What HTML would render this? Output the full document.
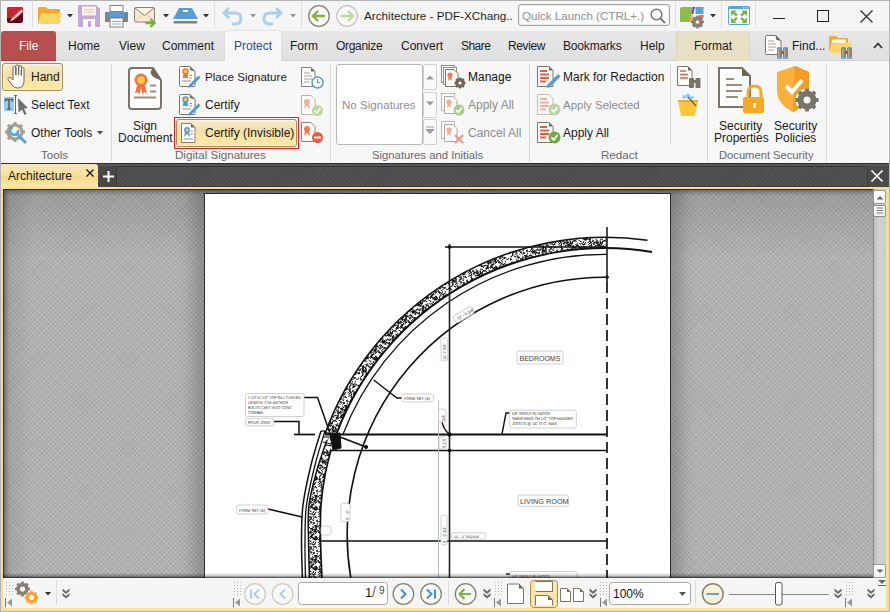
<!DOCTYPE html>
<html><head><meta charset="utf-8">
<style>
*{box-sizing:border-box;margin:0;padding:0}
html,body{width:890px;height:612px;overflow:hidden;background:#f5f5f5;font-family:"Liberation Sans",sans-serif;font-size:12px;color:#1a1a1a}
.a{position:absolute}
.t{position:absolute;white-space:nowrap;line-height:14px}
svg{position:absolute;overflow:visible}
.sep{position:absolute;width:1px;background:#d9d9d9}
.tab{position:absolute;top:39px;white-space:nowrap;color:#1b1b1b}
.gl{position:absolute;top:148px;color:#69676f;font-size:11.6px;white-space:nowrap;line-height:14px}
.dis{color:#8c8c8c}
</style></head><body>
<!-- outer frame -->
<div class="a" style="left:0;top:0;width:890px;height:612px;border:1px solid #b4b4b4;border-bottom-color:#b4b4b4"></div>

<!-- TITLE BAR -->
<div class="a" style="left:1px;top:1px;width:888px;height:30px;background:#f5f5f5"></div>
<div id="titlebar">
  <!-- app icon -->
  <svg style="left:7px;top:7px" width="16" height="16" viewBox="0 0 16 16">
    <rect x="0" y="0" width="16" height="16" rx="2" fill="#5c0022"/>
    <path d="M2 0 H14 Q16 0 16 2 V6 L9 12 L0 11 V2 Q0 0 2 0Z" fill="#d42232"/>
    <rect x="0" y="5.5" width="5" height="5" fill="#a33a12"/>
    <path d="M3 14.5 L5 11 L14.5 2.5 L16 4.5 L7 12.5Z" fill="#fff"/>
    <path d="M5.5 11.2 L14.8 3.2" stroke="#c0302a" stroke-width=".9" stroke-dasharray="1.2 .8"/>
    <path d="M7 12.3 L15.5 5" stroke="#a33a12" stroke-width=".8" stroke-dasharray="1.2 .8"/>
  </svg>
  <div class="sep" style="left:32px;top:2px;height:26px;background:#dedede"></div>
  <!-- folder -->
  <svg style="left:38px;top:7px" width="24" height="18" viewBox="0 0 24 18">
    <path d="M0 2 Q0 0 2 0 L8 0 L10 2 L21 2 Q22 2 22 3 L22 16 L0 16 Z" fill="#f7a825"/>
    <path d="M3 6 L24 6 L21 16 Q21 17 20 17 L0 17 Z" fill="#fdd66a"/>
  </svg>
  <svg style="left:67px;top:14px" width="6" height="4"><path d="M0 0 L6 0 L3 3.5Z" fill="#333"/></svg>
  <!-- save -->
  <svg style="left:78px;top:5px" width="22" height="22" viewBox="0 0 22 22">
    <path d="M1 0 H18 L22 4 V21 Q22 22 21 22 H1 Q0 22 0 21 V1 Q0 0 1 0Z" fill="#c3a9d6"/>
    <rect x="4" y="1.5" width="14" height="9" fill="#fbf4e6"/>
    <path d="M6 4.5 H16 M6 7 H16" stroke="#d9ccb8" stroke-width="1"/>
    <rect x="5" y="14" width="12" height="8" fill="#fff"/>
    <rect x="10" y="16" width="3" height="6" fill="#c3a9d6"/>
  </svg>
  <!-- printer -->
  <svg style="left:105px;top:5px" width="23" height="22" viewBox="0 0 23 22">
    <rect x="5" y="0.5" width="13" height="6" fill="#fff" stroke="#8a7f70" stroke-width="1"/>
    <path d="M1 7 H22 Q23 7 23 8 V17 H0 V8 Q0 7 1 7Z" fill="#8a7f70"/>
    <rect x="3" y="7" width="17" height="5" fill="#5b9bd5"/>
    <rect x="5" y="13" width="13" height="9" fill="#fff" stroke="#8a7f70" stroke-width="1"/>
    <path d="M7 16.5H16 M7 19H16" stroke="#7ab0e0" stroke-width="1"/>
  </svg>
  <!-- email -->
  <svg style="left:134px;top:7px" width="23" height="20" viewBox="0 0 23 20">
    <rect x="0.5" y="0.5" width="20" height="14.5" rx="1.2" fill="#f8e9cf" stroke="#8a7f70"/>
    <path d="M1 1 L10.5 8.5 L20 1" stroke="#8a7f70" fill="#fdf5e6"/>
    <path d="M1 14.5 L8 8 M20 14.5 L13 8" stroke="#cdbfa6" stroke-width=".8"/>
    <path d="M11.5 16 H20 M16.5 12 L20.5 16 L16.5 20" stroke="#76b043" stroke-width="2.4" fill="none"/>
  </svg>
  <svg style="left:163px;top:14px" width="6" height="4"><path d="M0 0 L6 0 L3 3.5Z" fill="#333"/></svg>
  <!-- scanner -->
  <svg style="left:173px;top:8px" width="25" height="16" viewBox="0 0 25 16">
    <path d="M6 0 H19 L25 11 H0Z" fill="#5b9bd5"/>
    <rect x="10" y="2" width="5" height="2" fill="#fff"/>
    <rect x="0.5" y="13" width="24" height="2.5" rx="1" fill="#8a7f70"/>
  </svg>
  <svg style="left:203px;top:14px" width="6" height="4"><path d="M0 0 L6 0 L3 3.5Z" fill="#333"/></svg>
  <div class="sep" style="left:214px;top:2px;height:26px;background:#dedede"></div>
  <!-- undo -->
  <svg style="left:222px;top:7px" width="21" height="18" viewBox="0 0 21 18">
    <path d="M2 6 H13 Q19 6 19 11.5 Q19 17 13 17 H10" stroke="#a9d0ec" stroke-width="3" fill="none"/>
    <path d="M7 1 L2 6 L7 11" stroke="#a9d0ec" stroke-width="3" fill="none"/>
  </svg>
  <svg style="left:250px;top:14px" width="6" height="4"><path d="M0 0 L6 0 L3 3.5Z" fill="#999"/></svg>
  <!-- redo -->
  <svg style="left:262px;top:7px" width="21" height="18" viewBox="0 0 21 18">
    <path d="M19 6 H8 Q2 6 2 11.5 Q2 17 8 17 H11" stroke="#a9d0ec" stroke-width="3" fill="none"/>
    <path d="M14 1 L19 6 L14 11" stroke="#a9d0ec" stroke-width="3" fill="none"/>
  </svg>
  <svg style="left:290px;top:14px" width="6" height="4"><path d="M0 0 L6 0 L3 3.5Z" fill="#999"/></svg>
  <div class="sep" style="left:301px;top:2px;height:26px;background:#dedede"></div>
  <!-- back / forward -->
  <svg style="left:308px;top:5px" width="22" height="22" viewBox="0 0 22 22">
    <circle cx="11" cy="11" r="10.3" fill="#f8f8f8" stroke="#8c8273" stroke-width="1.3"/>
    <path d="M5 11 H17 M10 6 L5 11 L10 16" stroke="#7cb342" stroke-width="2.4" fill="none"/>
  </svg>
  <svg style="left:336px;top:5px" width="22" height="22" viewBox="0 0 22 22">
    <circle cx="11" cy="11" r="10.3" fill="#f8f8f8" stroke="#c9c3ba" stroke-width="1.2"/>
    <path d="M5 11 H17 M12 6 L17 11 L12 16" stroke="#bcd9a0" stroke-width="2.4" fill="none"/>
  </svg>
  <div class="t" style="left:364px;top:9px;color:#1d1d1d;font-size:11.7px">Architecture - PDF-XChang..</div>
  <!-- quick launch -->
  <div class="a" style="left:518px;top:4px;width:152px;height:22px;border:1px solid #a3a3a3;border-radius:3px;background:#fff;box-shadow:inset 0 0 0 1px #ececec"></div>
  <div class="t" style="left:522px;top:9px;color:#8e8e8e;font-size:11.6px">Quick Launch (CTRL+.)</div>
  <svg style="left:650px;top:8px" width="16" height="16" viewBox="0 0 16 16">
    <circle cx="6.5" cy="6.5" r="5.3" stroke="#777" stroke-width="1.5" fill="none"/>
    <path d="M10.5 10.5 L15 15" stroke="#777" stroke-width="1.8"/>
  </svg>
  <div class="sep" style="left:675px;top:2px;height:26px;background:#dedede"></div>
  <!-- ui options -->
  <svg style="left:680px;top:6px" width="25" height="24" viewBox="0 0 25 24">
    <path d="M2 1 H13 L9.5 16 H1 Q0 16 0 15 V3 Q0 1 2 1Z" fill="#8dbb4c"/>
    <path d="M13 1 H15 L13.3 8 H11.3Z" fill="#6a3f9c"/>
    <rect x="15.5" y="1" width="8" height="7" fill="#5ba3dd"/>
    <path d="M11 9 H13 L11.3 16 H9.3Z" fill="#f7a825"/>
    <path d="M19 9 H23.5 V12 H19Z" fill="#f26b43"/>
    <circle cx="17.5" cy="16" r="4.2" fill="none" stroke="#8a7f70" stroke-width="3"/>
    <path d="M17.5 9.5 V22.5 M11 16 H24 M12.9 11.4 L22.1 20.6 M22.1 11.4 L12.9 20.6" stroke="#8a7f70" stroke-width="2.2"/>
    <circle cx="17.5" cy="16" r="1.8" fill="#f5f5f5"/>
  </svg>
  <svg style="left:710px;top:14px" width="6" height="4"><path d="M0 0 L6 0 L3 3.5Z" fill="#333"/></svg>
  <div class="sep" style="left:721px;top:2px;height:26px;background:#dedede"></div>
  <!-- fullscreen -->
  <svg style="left:728px;top:6px" width="22" height="19" viewBox="0 0 22 19">
    <rect x="0.5" y="0.5" width="21" height="18" rx="1" fill="#fff" stroke="#5ba3dd"/>
    <rect x="0.5" y="0.5" width="21" height="2.5" fill="#5ba3dd"/>
    <circle cx="15.5" cy="1.8" r=".6" fill="#fff"/><circle cx="17.5" cy="1.8" r=".6" fill="#fff"/><circle cx="19.5" cy="1.8" r=".6" fill="#fff"/>
    <g fill="#7cb342">
      <path d="M3 4.5 H8.5 L7 6 L9.8 8.8 L8 10.6 L5.2 7.8 L3 10Z"/>
      <path d="M19 4.5 H13.5 L15 6 L12.2 8.8 L14 10.6 L16.8 7.8 L19 10Z"/>
      <path d="M3 17 H8.5 L7 15.5 L9.8 12.7 L8 10.9 L5.2 13.7 L3 11.5Z"/>
      <path d="M19 17 H13.5 L15 15.5 L12.2 12.7 L14 10.9 L16.8 13.7 L19 11.5Z"/>
    </g>
  </svg>
  <div class="sep" style="left:755px;top:2px;height:26px;background:#dedede"></div>
  <div class="a" style="left:773px;top:18px;width:12px;height:1px;background:#222"></div>
  <div class="a" style="left:817px;top:10px;width:12px;height:12px;border:1px solid #222"></div>
  <svg style="left:860px;top:10px" width="13" height="13" viewBox="0 0 13 13"><path d="M0.5 0.5 L12.5 12.5 M12.5 0.5 L0.5 12.5" stroke="#222" stroke-width="1.1"/></svg>
</div>

<!-- TAB STRIP -->
<div class="a" style="left:1px;top:31px;width:888px;height:30px;background:linear-gradient(#e7e7e7,#e0e0e0);border-bottom:1px solid #d2d2d2"></div>
<div class="a" style="left:1px;top:31px;width:55px;height:30px;background:#b94e4e;border-radius:3px 3px 0 0;border-bottom:1px solid #a84444"></div>
<div class="tab" style="left:19px;color:#fff">File</div>
<div class="tab" style="left:68px">Home</div>
<div class="tab" style="left:119px">View</div>
<div class="tab" style="left:162px">Comment</div>
<div class="a" style="left:225px;top:31px;width:56px;height:31px;background:#f7f7f7;border-radius:3px 3px 0 0;box-shadow:0 -1px 2px rgba(0,0,0,.08)"></div>
<div class="tab" style="left:234px;color:#2e4a9a">Protect</div>
<div class="tab" style="left:290px">Form</div>
<div class="tab" style="left:336px;letter-spacing:-.3px">Organize</div>
<div class="tab" style="left:401px">Convert</div>
<div class="tab" style="left:461px;letter-spacing:-.55px">Share</div>
<div class="tab" style="left:508px;letter-spacing:-.4px">Review</div>
<div class="tab" style="left:563px;letter-spacing:-.17px">Bookmarks</div>
<div class="tab" style="left:640px">Help</div>
<div class="a" style="left:676px;top:31px;width:74px;height:30px;background:#e8e0c4;border-left:1px solid #ddd3a8;border-right:1px solid #e2d6a8"></div>
<div class="tab" style="left:694px">Format</div>
<div id="findicons">
  <svg style="left:765px;top:35px" width="24" height="24" viewBox="0 0 24 24">
    <path d="M1.5 0.5 H11 L16 6 V19.5 H1.5 Q0.5 19.5 0.5 18.5 V1.5 Q0.5 0.5 1.5 0.5Z" fill="#fff" stroke="#7e7465"/>
    <path d="M11 0.5 Q10 3.5 12 5 L16 6Z" fill="#6f6658"/>
    <path d="M3 6 H9 M3 9 H11 M3 12 H11 M3 15 H9" stroke="#a89f90"/>
    <g transform="translate(12 12)">
      <rect x="0" y="1" width="5" height="10" fill="#8a8272"/><rect x="6" y="1" width="5" height="10" fill="#8a8272"/>
      <rect x="0.5" y="0" width="4" height="1.5" fill="#5ba3dd"/><rect x="6.5" y="0" width="4" height="1.5" fill="#5ba3dd"/>
      <rect x="0" y="10" width="5" height="1.8" fill="#5ba3dd"/><rect x="6" y="10" width="5" height="1.8" fill="#5ba3dd"/>
      <rect x="4.5" y="4" width="2" height="3" fill="#6f6658"/>
      <rect x="1" y="2" width="1.5" height="8" fill="#b2aa9a"/><rect x="7" y="2" width="1.5" height="8" fill="#b2aa9a"/>
    </g>
  </svg>
  <div class="t" style="left:792px;top:39px">Find...</div>
  <svg style="left:829px;top:36px" width="24" height="23" viewBox="0 0 24 23">
    <path d="M0 2 Q0 0 2 0 L7 0 L9 2 L18 2 Q19 2 19 3 L19 14 L0 14 Z" fill="#f7a825"/>
    <rect x="3" y="3.5" width="14" height="6" fill="#fff"/>
    <path d="M2.5 6.5 L23 6.5 L19.5 16 L0 17 Z" fill="#fdd66a"/>
    <g transform="translate(12 11)">
      <rect x="0" y="1" width="5" height="10" fill="#8a8272"/><rect x="6" y="1" width="5" height="10" fill="#8a8272"/>
      <rect x="0.5" y="0" width="4" height="1.5" fill="#5ba3dd"/><rect x="6.5" y="0" width="4" height="1.5" fill="#5ba3dd"/>
      <rect x="0" y="10" width="5" height="1.8" fill="#5ba3dd"/><rect x="6" y="10" width="5" height="1.8" fill="#5ba3dd"/>
      <rect x="4.5" y="4" width="2" height="3" fill="#6f6658"/>
      <rect x="1" y="2" width="1.5" height="8" fill="#b2aa9a"/><rect x="7" y="2" width="1.5" height="8" fill="#b2aa9a"/>
    </g>
  </svg>
  <svg style="left:873px;top:42px" width="10" height="7" viewBox="0 0 10 7"><path d="M1 6 L5 1.5 L9 6" stroke="#333" stroke-width="1.8" fill="none"/></svg>
</div>

<!-- RIBBON BODY -->
<div class="a" style="left:1px;top:61px;width:888px;height:102px;background:#f7f7f7"></div>
<div id="ribbon">
  <!-- TOOLS GROUP -->
  <div class="a" style="left:2px;top:63px;width:61px;height:28px;border:1px solid #a38e58;border-radius:3px;background:linear-gradient(#f9ecc8,#f1dda9 46%,#fce39c 52%,#fde8a8);box-shadow:inset 0 0 0 1px rgba(255,255,255,.45)"></div>
  <svg style="left:7px;top:64px" width="20" height="25" viewBox="0 0 20 25">
    <path d="M6 14 V4 Q6 2.2 7.4 2.2 Q8.8 2.2 8.8 4 V11 V2.5 Q8.8 0.8 10.2 0.8 Q11.6 0.8 11.6 2.5 V11 V3.2 Q11.6 1.6 13 1.6 Q14.4 1.6 14.4 3.2 V11.5 V5 Q14.4 3.5 15.7 3.5 Q17 3.5 17 5 V17 Q17 24 10.5 24 Q7 24 5 21 L1.3 15.8 Q0.4 14.4 1.6 13.7 Q3 12.9 4.2 14.2 L6 16Z" fill="#fff" stroke="#6f6658" stroke-width="1"/>
    <path d="M8.8 11 V4 M11.6 11 V3 M14.4 11.5 V5" stroke="#6f6658" stroke-width=".9"/>
  </svg>
  <div class="t" style="left:31px;top:70px">Hand</div>
  <svg style="left:3px;top:95px" width="28" height="22" viewBox="0 0 28 22">
    <rect x="1" y="2" width="10" height="14" fill="#8fcdf2"/>
    <path d="M2.5 4.5 H9.5 M2.5 4 V6.5 M9.5 4 V6.5 M6 4.5 V14 M4.2 14 H7.8" stroke="#5e5a55" stroke-width="1.5" fill="none"/>
    <path d="M12.5 0.5 V18.5 M11 0.5 H14 M11 18.5 H14" stroke="#6a6a6a" stroke-width="1"/>
    <path d="M15 3 L25 13 L21 13.5 L23.5 19 L21.5 20 L19 14.5 L15.5 17.5Z" fill="#6f6f6f"/>
  </svg>
  <div class="t" style="left:31px;top:98px">Select Text</div>
  <svg style="left:4px;top:121px" width="24" height="24" viewBox="0 0 24 24">
    <circle cx="11" cy="11" r="7" fill="none" stroke="#a89e8c" stroke-width="3.2"/>
    <path d="M11 1 V5 M11 17 V21 M1 11 H5 M17 11 H21 M3.9 3.9 L6.8 6.8 M15.2 15.2 L18.1 18.1 M3.9 18.1 L6.8 15.2 M15.2 6.8 L18.1 3.9" stroke="#a89e8c" stroke-width="3"/>
    <path d="M12 12 L22 22" stroke="#5ba3dd" stroke-width="3"/>
    <path d="M14 9 A4 4 0 1 1 9 6" stroke="#5ba3dd" stroke-width="2.6" fill="none"/>
  </svg>
  <div class="t" style="left:31px;top:126px">Other Tools</div>
  <svg style="left:97px;top:131px" width="6" height="4"><path d="M0 0 L6 0 L3 3.5Z" fill="#444"/></svg>
  <div class="gl" style="left:41px">Tools</div>
  <div class="sep" style="left:111px;top:64px;height:98px"></div>

  <!-- DIGITAL SIGNATURES -->
  <svg style="left:128px;top:67px" width="34" height="43" viewBox="0 0 34 43">
    <path d="M4 1 H25 L33 13 V39 Q33 42 30 42 H4 Q1 42 1 39 V4 Q1 1 4 1Z" fill="#fff" stroke="#7e7465" stroke-width="2"/>
    <path d="M25 1 Q22 4 23 7 Q25 11 33 13Z" fill="#6f6658"/>
    <circle cx="13" cy="13" r="6.5" fill="#f4703f"/>
    <circle cx="13" cy="13" r="4" fill="#fbc84a"/>
    <path d="M9 18.5 L7 26.5 L10 25 L11.5 28 L13 20 L14.5 28 L16 25 L19 26.5 L17 18.5Z" fill="#f4703f"/>
    <path d="M22 18.5 H28 M22 24.5 H28 M6 30.5 H28" stroke="#9a8f7d" stroke-width="2"/>
  </svg>
  <div class="t" style="left:133px;top:120px;line-height:13px;text-align:center;width:24px">Sign</div>
  <div class="t" style="left:118px;top:132px;line-height:13px">Document</div>
  <svg style="left:179px;top:66px" width="22" height="22" viewBox="0 0 22 22">
    <path d="M1.5 0.5 H11 L16 5.5 V19.5 Q16 20.5 15 20.5 H1.5 Q0.5 20.5 0.5 19.5 V1.5 Q0.5 0.5 1.5 0.5Z" fill="#fff" stroke="#7e7465"/>
    <path d="M11 0.5 Q10 3 12 4.5 L16 5.5Z" fill="#6f6658"/>
    <circle cx="6.5" cy="5.5" r="3.2" fill="#f4703f"/><circle cx="6.5" cy="5.5" r="1.8" fill="#fbc84a"/>
    <path d="M4.5 8 L3.5 12.5 L5.5 11.5 L6.5 13 L7.5 11.5 L9.5 12.5 L8.5 8Z" fill="#f4703f"/>
    <path d="M10.5 9.5 H13 M10.5 12 H13 M3 15 H12" stroke="#9a8f7d" stroke-width="1"/>
    <path d="M10 19 L19.5 9.5 L21.5 11.5 L12 21 L9 21.8Z" fill="#4a9ae0"/>
  </svg>
  <div class="t" style="left:205px;top:70px;font-size:11.6px">Place Signature</div>
  <svg style="left:179px;top:94px" width="22" height="22" viewBox="0 0 22 22">
    <path d="M1.5 0.5 H11 L16 5.5 V19.5 Q16 20.5 15 20.5 H1.5 Q0.5 20.5 0.5 19.5 V1.5 Q0.5 0.5 1.5 0.5Z" fill="#fff" stroke="#7e7465"/>
    <path d="M11 0.5 Q10 3 12 4.5 L16 5.5Z" fill="#6f6658"/>
    <circle cx="6.5" cy="5.5" r="3.2" fill="#4a9ae0"/><circle cx="6.5" cy="5.5" r="1.8" fill="#fbc84a"/>
    <path d="M4.5 8 L3.5 12.5 L5.5 11.5 L6.5 13 L7.5 11.5 L9.5 12.5 L8.5 8Z" fill="#4a9ae0"/>
    <path d="M10.5 9.5 H13 M10.5 12 H13 M3 15 H12" stroke="#9a8f7d" stroke-width="1"/>
    <path d="M10 19 L19.5 9.5 L21.5 11.5 L12 21 L9 21.8Z" fill="#4a9ae0"/>
  </svg>
  <div class="t" style="left:205px;top:98px">Certify</div>
  <div class="a" style="left:174px;top:117px;width:125px;height:32px;border:1px solid #e6202a"></div>
  <div class="a" style="left:176px;top:119px;width:121px;height:28px;border:1px solid #a38e58;border-radius:3px;background:linear-gradient(#f9ecc8,#f1dda9 46%,#fce39c 52%,#fde8a8);box-shadow:inset 0 0 0 1px rgba(255,255,255,.45)"></div>
  <svg style="left:181px;top:123px" width="18" height="20" viewBox="0 0 18 20">
    <path d="M0.5 0.5 H10 L14 4.5 V19.5 H0.5Z" fill="#fff" stroke="#8a7f70"/>
    <path d="M10 0.5 V4.5 H14Z" fill="#6f6658"/>
    <circle cx="6" cy="7" r="3" fill="#5b9bd5"/><circle cx="6" cy="7" r="1.5" fill="#fbc55c"/>
    <path d="M4 9 L3 14 L6 11 L9 14 L8 9" fill="#5b9bd5"/>
    <path d="M9.5 8 H12 M9.5 11 H12 M3 16 H12" stroke="#9a8f7d"/>
  </svg>
  <div class="t" style="left:205px;top:126px">Certify (Invisible)</div>

  <svg style="left:301px;top:67px" width="23" height="22" viewBox="0 0 23 22">
    <path d="M0.5 0.5 H10 L14 4.5 V19.5 H0.5Z" fill="#fff" stroke="#8a7f70"/>
    <path d="M10 0.5 V4.5 H14Z" fill="#6f6658"/>
    <path d="M3 6 H9 M3 9 H11 M3 12 H11 M3 15 H8" stroke="#a89f90"/>
    <circle cx="16.5" cy="15.5" r="5.5" fill="#fff" stroke="#5b9bd5" stroke-width="1.5"/>
    <path d="M16.5 12 V15.5 H19" stroke="#5b9bd5" stroke-width="1.2" fill="none"/>
  </svg>
  <svg style="left:301px;top:95px" width="23" height="22" viewBox="0 0 23 22" opacity=".55">
    <path d="M0.5 0.5 H10 L14 4.5 V19.5 H0.5Z" fill="#fff" stroke="#8a7f70"/>
    <circle cx="6" cy="7" r="3" fill="#f47b45"/>
    <path d="M4 9 L3 14 L6 11 L9 14 L8 9" fill="#f47b45"/>
    <circle cx="16.5" cy="15.5" r="5.5" fill="#8bbf5a"/>
    <path d="M13.5 15.5 L16 18 L19.5 13" stroke="#fff" stroke-width="1.6" fill="none"/>
  </svg>
  <svg style="left:301px;top:122px" width="23" height="22" viewBox="0 0 23 22">
    <path d="M0.5 0.5 H10 L14 4.5 V19.5 H0.5Z" fill="#fff" stroke="#8a7f70"/>
    <circle cx="6" cy="7" r="3" fill="#f47b45"/>
    <path d="M4 9 L3 14 L6 11 L9 14 L8 9" fill="#f47b45"/>
    <circle cx="16.5" cy="15.5" r="5.5" fill="#f05a3c"/>
    <path d="M13 15.5 H20" stroke="#fff" stroke-width="2"/>
  </svg>
  <div class="gl" style="left:175px">Digital Signatures</div>
  <div class="sep" style="left:330px;top:64px;height:98px"></div>

  <!-- SIGNATURES AND INITIALS -->
  <div class="a" style="left:336px;top:64px;width:87px;height:81px;border:1px solid #b9b9b9;border-radius:3px;background:#fff"></div>
  <div class="t" style="left:342px;top:98px;color:#8f8f8f;font-size:11.6px">No Signatures</div>
  <div class="a" style="left:423px;top:64px;width:14px;height:26px;border:1px solid #d0d0d0;border-radius:2px;background:#fafafa"></div>
  <div class="a" style="left:423px;top:92px;width:14px;height:26px;border:1px solid #d0d0d0;border-radius:2px;background:#fafafa"></div>
  <div class="a" style="left:423px;top:119px;width:14px;height:26px;border:1px solid #d0d0d0;border-radius:2px;background:#fafafa"></div>
  <svg style="left:426px;top:75px" width="8" height="5"><path d="M0 4.5 L4 0.5 L8 4.5Z" fill="#9a9a9a"/></svg>
  <svg style="left:426px;top:101px" width="8" height="5"><path d="M0 0.5 L4 4.5 L8 0.5Z" fill="#9a9a9a"/></svg>
  <svg style="left:426px;top:127px" width="8" height="7"><path d="M0 0 H8 M0 2.5 L4 6.5 L8 2.5Z" stroke="#9a9a9a" fill="#9a9a9a" stroke-width="1"/></svg>
  <!-- manage icon -->
  <svg style="left:441px;top:65px" width="25" height="24" viewBox="0 0 25 24">
    <rect x="0.5" y="0.5" width="13" height="17" fill="#fff" stroke="#9a8f7d"/>
    <rect x="2.5" y="2.5" width="13" height="17" fill="#fff" stroke="#9a8f7d"/>
    <path d="M4.5 4.5 H13 L17 8.5 V21.5 H4.5Z" fill="#fff" stroke="#7e7465"/>
    <circle cx="9" cy="10" r="2.6" fill="#f47b45"/>
    <path d="M7.5 12 L7 16 L9 14 L11 16 L10.5 12" fill="#f47b45"/>
    <circle cx="19" cy="18" r="3.8" fill="none" stroke="#6f6658" stroke-width="2.4"/>
    <path d="M19 12.5 V23.5 M13.5 18 H24.5 M15 14 L23 22 M23 14 L15 22" stroke="#6f6658" stroke-width="1.8"/>
    <circle cx="19" cy="18" r="1.6" fill="#f7f7f7"/>
  </svg>
  <div class="t" style="left:468px;top:70px;color:#111">Manage</div>
  <svg style="left:441px;top:93px" width="25" height="24" viewBox="0 0 25 24" opacity=".6">
    <rect x="0.5" y="0.5" width="13" height="17" fill="#fff" stroke="#9a8f7d"/>
    <path d="M3.5 3.5 H12 L16 7.5 V20.5 H3.5Z" fill="#fff" stroke="#7e7465"/>
    <circle cx="8" cy="9" r="2.6" fill="#f47b45"/>
    <path d="M6.5 11 L6 15 L8 13 L10 15 L9.5 11" fill="#f47b45"/>
    <circle cx="18" cy="17" r="5.5" fill="#70ad47"/>
    <path d="M15 17 L17.3 19.3 L21 14.5" stroke="#fff" stroke-width="1.8" fill="none"/>
  </svg>
  <div class="t dis" style="left:468px;top:98px">Apply All</div>
  <svg style="left:441px;top:121px" width="25" height="24" viewBox="0 0 25 24" opacity=".6">
    <rect x="0.5" y="0.5" width="13" height="17" fill="#fff" stroke="#9a8f7d"/>
    <path d="M3.5 3.5 H12 L16 7.5 V20.5 H3.5Z" fill="#fff" stroke="#7e7465"/>
    <circle cx="8" cy="9" r="2.6" fill="#f47b45"/>
    <path d="M6.5 11 L6 15 L8 13 L10 15 L9.5 11" fill="#f47b45"/>
    <path d="M14 14 L22 22 M22 14 L14 22" stroke="#f05a3c" stroke-width="2.4"/>
  </svg>
  <div class="t dis" style="left:468px;top:126px">Cancel All</div>
  <div class="gl" style="left:372px;font-size:11.3px">Signatures and Initials</div>
  <div class="sep" style="left:529px;top:64px;height:98px"></div>

  <!-- REDACT -->
  <svg style="left:537px;top:66px" width="24" height="21" viewBox="0 0 24 21">
    <path d="M0.5 0.5 H12 L16 4.5 V20.5 H0.5Z" fill="#fff" stroke="#7e7465"/>
    <path d="M12 0.5 V4.5 H16Z" fill="#6f6658"/>
    <path d="M3 5 H10 M3 8.5 H12 M3 12 H12 M3 15.5 H9" stroke="#f05a3c" stroke-width="1.8"/>
    <path d="M10 19 L21 8 L23.5 10.5 L12.5 21.5 L9.5 21.8Z" fill="#5b9bd5"/>
  </svg>
  <div class="t" style="left:563px;top:70px">Mark for Redaction</div>
  <svg style="left:537px;top:94px" width="24" height="22" viewBox="0 0 24 22" opacity=".45">
    <path d="M0.5 0.5 H12 L16 4.5 V20.5 H0.5Z" fill="#fff" stroke="#7e7465"/>
    <path d="M3 5 H10 M3 8.5 H12 M3 12 H12 M3 15.5 H9" stroke="#f05a3c" stroke-width="1.8"/>
    <circle cx="17.5" cy="15.5" r="6" fill="#70ad47"/>
    <path d="M14.5 15.5 L16.8 17.8 L20.5 13" stroke="#fff" stroke-width="1.8" fill="none"/>
  </svg>
  <div class="t dis" style="left:563px;top:98px;font-size:11.5px">Apply Selected</div>
  <svg style="left:537px;top:122px" width="24" height="22" viewBox="0 0 24 22">
    <path d="M0.5 0.5 H12 L16 4.5 V20.5 H0.5Z" fill="#fff" stroke="#7e7465"/>
    <path d="M12 0.5 V4.5 H16Z" fill="#6f6658"/>
    <path d="M3 5 H10 M3 8.5 H12 M3 12 H12 M3 15.5 H9" stroke="#f05a3c" stroke-width="1.8"/>
    <circle cx="17.5" cy="15.5" r="6" fill="#70ad47"/>
    <path d="M14.5 15.5 L16.8 17.8 L20.5 13" stroke="#fff" stroke-width="1.8" fill="none"/>
  </svg>
  <div class="t" style="left:563px;top:126px">Apply All</div>
  <div class="sep" style="left:670px;top:65px;height:80px"></div>
  <svg style="left:677px;top:66px" width="24" height="22" viewBox="0 0 24 22">
    <path d="M0.5 0.5 H11 L15 4.5 V19.5 H0.5Z" fill="#fff" stroke="#7e7465"/>
    <path d="M11 0.5 V4.5 H15Z" fill="#6f6658"/>
    <path d="M3 5 H9 M3 8.5 H11 M3 12 H11" stroke="#f05a3c" stroke-width="1.6"/>
    <rect x="12" y="12" width="5" height="10" rx="1" fill="#7a7468"/>
    <rect x="18.5" y="12" width="5" height="10" rx="1" fill="#7a7468"/>
    <rect x="16" y="14" width="3" height="3" fill="#7a7468"/>
  </svg>
  <svg style="left:678px;top:93px" width="20" height="23" viewBox="0 0 20 23">
    <circle cx="6" cy="4" r="2" fill="#8fd3ef"/><circle cx="10" cy="3" r="2.4" fill="#8fd3ef"/><circle cx="14" cy="4.5" r="2" fill="#8fd3ef"/>
    <path d="M0 7 H20 L17 23 H3Z" fill="#fdc73a"/>
    <path d="M0 7 H20 V9 H0Z" fill="#f3a53a"/>
    <path d="M10 4 L18 13" stroke="#6f6658" stroke-width="1.5"/>
  </svg>
  <div class="gl" style="left:601px">Redact</div>
  <div class="sep" style="left:707px;top:64px;height:98px"></div>

  <!-- DOCUMENT SECURITY -->
  <svg style="left:718px;top:67px" width="47" height="47" viewBox="0 0 47 47">
    <path d="M1 1 H24 L32 9 V40 H1Z" fill="#fff" stroke="#7e7465" stroke-width="2"/>
    <path d="M24 1 V9 H32Z" fill="#6f6658"/>
    <path d="M8 12 H16 M8 18 H24 M8 24 H24 M8 30 H20" stroke="#9a8f7d" stroke-width="2"/>
    <path d="M30 31 V26 Q30 19 36.5 19 Q43 19 43 26 V31" fill="none" stroke="#f7a825" stroke-width="3"/>
    <rect x="25" y="30" width="21" height="16" rx="2" fill="#f7a825"/>
    <path d="M35 36 H38 L37.5 41 H35.5Z" fill="#fff"/>
  </svg>
  <div class="t" style="left:719px;top:120px;line-height:13px">Security</div>
  <div class="t" style="left:714px;top:132px;line-height:13px">Properties</div>
  <svg style="left:777px;top:66px" width="42" height="48" viewBox="0 0 42 48">
    <path d="M0 6 L18 0 L32 6 V24 Q32 38 16 46 Q0 38 0 24Z" fill="#fbb03b"/>
    <path d="M18 0 L32 6 V24 Q32 38 16 46Z" fill="#f49d1e"/>
    <path d="M9 20 L15 26 L25 14" stroke="#fff" stroke-width="4" fill="none"/>
    <circle cx="30" cy="34" r="11.5" fill="#f7f7f7"/>
    <circle cx="30" cy="34" r="7" fill="none" stroke="#7a7468" stroke-width="5"/>
    <path d="M30 22.5 V45.5 M18.5 34 H41.5 M21.9 25.9 L38.1 42.1 M38.1 25.9 L21.9 42.1" stroke="#7a7468" stroke-width="4"/>
    <circle cx="30" cy="34" r="3.5" fill="#f7f7f7"/>
  </svg>
  <div class="t" style="left:774px;top:120px;line-height:13px">Security</div>
  <div class="t" style="left:775px;top:132px;line-height:13px">Policies</div>
  <div class="gl" style="left:719px;font-size:11.2px">Document Security</div>
  <div class="sep" style="left:826px;top:64px;height:98px"></div>
</div>


<!-- DOC TAB BAR -->
<div class="a" style="left:1px;top:163px;width:888px;height:24px;background-color:#4e4e4e;background-image:repeating-linear-gradient(45deg,rgba(255,255,255,.03) 0 1.5px,transparent 1.5px 3.2px),repeating-linear-gradient(-45deg,rgba(0,0,0,.05) 0 1.5px,transparent 1.5px 3.2px)"></div>
<div class="a" style="left:1px;top:163px;width:888px;height:1px;background:#2f2f2f"></div>
<div class="a" style="left:1px;top:164px;width:888px;height:2px;background:#575757"></div>
<div class="a" style="left:1px;top:166px;width:888px;height:1px;background:#353535"></div>
<div class="a" style="left:1px;top:186px;width:888px;height:1px;background:#3a3a3a"></div>
<div class="a" style="left:1px;top:164px;width:97px;height:23px;border-radius:0 3px 0 0;background:linear-gradient(#f9e6b8,#fbe2a2 45%,#fad889 55%,#fde7a6)"></div>
<div class="t" style="left:8px;top:169px;color:#1a1a1a">Architecture</div>
<svg style="left:86px;top:169px" width="8" height="8" viewBox="0 0 8 8"><path d="M0.5 0.5 L7.5 7.5 M7.5 0.5 L0.5 7.5" stroke="#111" stroke-width="1.2"/></svg>
<div class="a" style="left:98px;top:166px;width:19px;height:21px;background:#484848;border-right:1px solid #3a3a3a"></div>
<svg style="left:103px;top:171px" width="11" height="11" viewBox="0 0 11 11"><path d="M5.5 0 V11 M0 5.5 H11" stroke="#fff" stroke-width="2"/></svg>
<div class="a" style="left:867px;top:166px;width:20px;height:21px;background:#4a4a4a;border-left:1px solid #3a3a3a"></div>
<svg style="left:871px;top:170px" width="12" height="12" viewBox="0 0 12 12"><path d="M0.5 0.5 L11.5 11.5 M11.5 0.5 L0.5 11.5" stroke="#fff" stroke-width="1.7"/></svg>

<!-- GOLD FRAME -->
<div class="a" style="left:1px;top:187px;width:888px;height:424px;background:#f8e196"></div>
<!-- DOC AREA -->
<div class="a" style="left:3px;top:189px;width:870px;height:389px;background-color:#bababa;background-image:repeating-linear-gradient(45deg,rgba(0,0,0,.055) 0 1.5px,transparent 1.5px 3.2px),repeating-linear-gradient(-45deg,rgba(0,0,0,.055) 0 1.5px,transparent 1.5px 3.2px);overflow:hidden">
  <div class="a" style="left:0;top:0;width:870px;height:70px;background:linear-gradient(rgba(0,0,0,.13),rgba(0,0,0,0))"></div>
  <div class="a" style="left:0;top:0;width:30px;height:389px;background:linear-gradient(90deg,rgba(0,0,0,.1),rgba(0,0,0,0))"></div>
  <div class="a" style="left:0;top:0;width:870px;height:389px;box-shadow:inset 1px 1px 0 #2e2e2e, inset 3px 3px 4px rgba(0,0,0,.35)"></div>
  <!-- page shadow -->
  <div class="a" style="left:190px;top:-6px;width:488px;height:404px;background:rgba(0,0,0,.2);filter:blur(8px)"></div>
  <div class="a" style="left:201px;top:4px;width:467px;height:400px;background:#fff;border:1px solid #2a2a2a"></div>
</div>
<!-- page drawing (page coords absolute) -->
<svg style="left:0;top:0" width="890" height="612" viewBox="0 0 890 612">
  <defs>
    <clipPath id="pg"><rect x="205" y="194" width="465" height="384"/></clipPath>
    <pattern id="conc" width="30" height="30" patternUnits="userSpaceOnUse">
      <rect width="30" height="30" fill="#fff"/>
      <path d="M13.6 17.1 L12.4 16.8 L14.0 17.8 Z M2.8 9.1 L2.2 10.0 M1.3 29.5 L0.2 32.2 M3.9 -0.2 L3.5 0.4 L4.6 1.3 Z M15.6 19.2 L15.8 21.2 M8.3 29.9 L6.5 32.3 M10.0 6.7 L10.1 6.7 L10.4 7.6 Z M1.7 5.9 L-1.5 6.8 L1.0 5.5 Z M2.6 10.0 L5.4 11.1 M7.4 3.0 L8.3 3.6 M16.8 13.4 L18.0 14.0 M18.8 4.6 L20.0 3.0 L20.2 2.8 Z M13.2 24.8 L11.1 26.4 L11.3 25.0 Z M2.5 2.4 L2.1 4.0 L2.2 2.9 Z M26.0 5.5 L24.9 6.2 M7.5 5.7 L9.5 7.1 M27.4 25.2 L29.8 25.7 L29.1 25.8 Z M25.1 17.0 L24.2 18.0 L25.4 18.1 Z M8.0 27.4 L7.6 27.0 L8.2 27.6 Z M3.9 10.9 L2.6 13.3 M20.0 18.2 L21.1 18.3 L20.0 17.7 Z M14.5 21.9 L16.0 22.3 M16.4 22.1 L14.7 24.4 M23.8 27.5 L22.2 28.0 M26.1 12.5 L25.5 15.1 M18.7 11.5 L20.9 12.0 M19.2 29.8 L20.1 32.4 M22.1 17.4 L23.9 17.9 M21.8 1.4 L22.5 1.2 L23.7 0.2 Z M-0.6 10.2 L0.8 8.9 L1.5 8.5 Z M20.0 6.0 L18.2 6.4 M25.4 11.5 L27.3 12.5 L27.0 12.8 Z M7.6 4.9 L8.6 5.1 L7.9 5.9 Z M30.0 12.9 L29.8 13.7 L29.2 14.0 Z M1.4 3.5 L-0.3 3.0 L0.9 3.9 Z M18.9 19.7 L17.5 21.9 M5.9 14.6 L5.4 13.9 L5.7 14.6 Z M16.5 19.7 L14.3 19.8 L16.3 17.3 Z M13.9 20.1 L14.7 20.4 L13.5 19.3 Z M6.1 21.7 L4.5 23.7 M6.4 27.0 L6.1 30.0 M23.7 9.6 L25.0 12.1 M2.5 13.2 L2.6 15.3 M0.9 24.3 L1.8 24.8 M10.1 24.0 L10.6 23.9 L10.7 23.6 Z M28.1 3.0 L28.7 2.6 L29.1 2.7 Z M9.4 11.4 L11.5 13.1 M25.5 29.1 L27.2 30.3 M17.4 15.1 L15.8 15.9 L16.3 15.1 Z M21.9 3.1 L20.1 1.9 L19.8 1.8 Z M23.7 27.3 L25.5 26.1 L25.2 25.9 Z M5.4 7.2 L4.6 7.5 L4.7 6.8 Z M7.2 5.7 L7.6 5.1 L6.8 6.3 Z M19.2 15.9 L16.7 17.1 M7.0 22.2 L8.4 24.4 M9.4 27.7 L8.1 28.2 M2.8 8.2 L3.8 8.1 L2.9 6.9 Z M20.6 0.5 L19.2 0.9 M29.1 3.5 L29.0 5.5 M19.9 5.7 L20.6 5.8 L20.1 5.2 Z M6.1 25.2 L9.0 26.1 M1.9 28.5 L2.9 30.2 M14.0 15.5 L15.9 15.5 M21.4 25.2 L20.5 24.8 L21.1 24.5 Z M26.8 24.1 L25.8 26.3 M12.1 18.0 L10.5 19.1 M7.7 27.3 L5.7 28.7 M12.2 26.9 L10.1 28.8 M22.5 12.1 L21.5 11.7 L23.4 12.6 Z M7.4 28.5 L7.1 28.0 L8.4 28.8 Z M21.5 23.7 L20.1 22.5 L19.4 21.7 Z M11.3 3.0 L11.0 4.4 M15.2 29.0 L14.3 31.0 M24.3 2.3 L26.5 2.6 M27.9 5.1 L26.8 5.9 L27.7 4.9 Z M17.9 11.0 L17.6 12.5 M8.0 20.6 L7.8 22.0 L8.3 22.3 Z M22.5 1.5 L25.4 2.2 M27.2 12.9 L28.6 14.2 M17.2 29.1 L16.0 26.9 L16.1 28.0 Z M6.0 2.0 L6.0 0.9 L6.3 1.4 Z M23.3 15.9 L21.3 18.2 M7.2 3.4 L6.1 6.0 M10.8 8.1 L10.1 10.4 M19.8 23.3 L19.6 21.8 L18.2 22.2 Z M12.1 18.1 L13.0 18.8 L12.9 18.5 Z M14.4 6.3 L12.9 7.1 M2.2 3.6 L0.3 5.3 M6.4 12.7 L7.0 14.1 M20.1 30.5 L19.5 29.4 L18.8 30.4 Z M2.8 2.0 L3.1 1.4 L1.6 2.9 Z M2.5 9.1 L4.0 11.0 M3.1 11.4 L4.5 12.0 L5.6 12.0 Z M12.9 25.0 L13.9 23.6 L12.9 23.8 Z M11.0 12.5 L11.0 12.6 L11.0 11.2 Z M22.8 26.5 L22.9 27.3 L23.1 27.0 Z M0.6 17.2 L3.2 15.1 L2.4 15.2 Z M22.9 19.5 L22.9 19.3 L22.1 20.3 Z M20.2 14.8 L18.9 16.5 M27.4 12.3 L25.0 13.5 M24.2 25.0 L23.0 27.6 M15.5 20.1 L16.5 22.9 L15.3 20.2 Z M6.1 12.7 L7.7 13.0 M9.3 3.4 L11.2 4.7 M1.9 13.8 L4.0 14.0 M3.6 5.7 L2.8 5.0 L2.9 5.0 Z M22.7 9.4 L22.9 11.4 M8.0 28.3 L7.8 25.6 L6.2 28.2 Z M23.5 12.8 L24.4 10.9 L22.8 11.5 Z M11.1 23.9 L13.3 25.1 M4.7 9.7 L4.6 11.2 M18.4 30.3 L18.2 30.4 L19.8 30.4 Z M2.4 8.0 L3.9 8.4 L3.6 7.5 Z M24.8 11.5 L23.8 12.6 L22.5 13.7 Z M9.3 9.6 L9.1 9.6 L8.8 9.2 Z M13.9 29.0 L16.5 29.1 M11.3 21.3 L11.5 22.7 M0.7 29.1 L-0.1 29.9 L-0.3 29.2 Z M12.2 19.7 L12.6 20.1 L12.2 19.7 Z M25.1 3.1 L24.3 2.6 L25.3 2.9 Z M2.6 6.1 L3.4 6.7 L2.7 7.0 Z M22.8 23.6 L22.8 25.1 L24.1 25.3 Z M19.6 18.4 L19.3 18.1 L19.8 18.6 Z M24.8 18.3 L23.5 18.7 M17.0 11.8 L16.5 11.1 L17.3 9.8 Z M27.9 18.9 L28.7 18.5 L29.1 18.6 Z M15.4 3.9 L14.1 3.9 L13.0 5.2 Z M30.7 23.9 L30.9 23.8 L30.0 25.4 Z M5.1 17.1 L6.2 16.7 L5.3 16.7 Z M22.1 11.4 L24.3 11.6 M6.1 13.5 L6.0 13.7 L6.1 13.8 Z M20.6 1.4 L19.2 0.9 L19.6 1.7 Z M22.7 22.6 L21.0 23.5 M25.7 12.3 L23.9 12.8 M15.8 15.8 L16.8 17.3 M1.6 21.8 L0.8 24.5 M21.5 9.0 L22.6 8.9 L21.3 9.7 Z M15.3 6.3 L16.6 8.1 L16.1 7.9 Z M12.6 24.2 L12.3 25.5 M27.2 4.4 L25.5 2.1 L26.4 2.4 Z M1.4 27.1 L0.4 25.3 L3.2 26.2 Z M13.9 27.3 L16.5 29.5 L13.8 29.3 Z M10.6 14.2 L9.3 14.2 M6.1 19.0 L7.4 19.2 M3.2 21.8 L1.7 22.4 M21.4 4.0 L21.8 6.4 M2.4 6.7 L3.7 7.6 M5.4 7.1 L6.3 9.2 M19.3 27.7 L20.3 25.9 L20.2 25.4 Z M28.3 13.5 L28.9 12.6 L30.3 12.1 Z M8.6 22.1 L9.3 23.6 L7.7 22.6 Z M21.4 11.7 L23.0 11.0 L23.1 12.6 Z M15.5 15.2 L15.3 17.9 M28.9 4.4 L28.4 6.1 L29.5 6.2 Z M7.1 14.7 L7.1 16.1 M1.1 17.9 L-1.2 18.9 M5.3 4.5 L5.1 4.9 L4.9 5.1 Z M15.9 15.7 L15.6 15.7 L17.5 16.4 Z M7.9 17.7 L8.9 18.2 M7.6 4.8 L5.8 6.3 M2.8 11.3 L1.8 12.9 L2.9 11.6 Z M14.2 21.9 L13.5 22.1 L13.6 21.8 Z M1.0 29.9 L2.9 31.6 M8.4 16.3 L7.3 17.4 L7.8 15.7 Z M12.4 20.0 L12.2 20.0 L12.0 19.3 Z M24.8 10.4 L25.5 10.3 L24.3 10.5 Z M14.0 9.3 L13.0 10.9 M26.3 5.8 L25.4 5.1 L25.2 5.6 Z M11.4 26.6 L13.1 27.3 L12.6 28.4 Z M26.4 1.4 L26.9 1.2 L27.3 -0.3 Z M11.9 6.5 L11.6 7.0 L11.9 6.7 Z M21.2 7.8 L23.4 8.9 M5.8 9.5 L5.3 7.8 L5.7 7.5 Z M1.2 0.7 L-0.7 2.0 M29.3 8.9 L31.1 10.4 M20.7 20.0 L22.9 22.0 M18.0 2.4 L18.6 2.7 L18.5 1.9 Z M12.1 14.3 L13.0 15.2 M3.0 10.7 L2.9 10.7 L1.7 10.0 Z M10.9 2.1 L10.9 1.5 L10.4 0.8 Z M10.9 25.9 L10.3 27.1 L11.6 26.4 Z M17.3 28.3 L16.3 30.7 M12.3 12.5 L10.9 13.0 M11.5 27.0 L11.3 27.9 L11.0 26.9 Z M6.9 20.2 L6.4 20.4 L7.1 20.5 Z M18.7 16.8 L20.1 19.2 M10.4 26.6 L9.5 27.9 M21.0 28.9 L20.8 28.5 L19.9 29.7 Z M15.4 7.1 L15.3 6.3 L15.2 6.4 Z M21.1 3.4 L21.3 5.3 M4.0 26.0 L5.9 25.6 L5.6 25.1 Z M21.5 9.8 L20.0 10.6 M24.9 17.0 L24.2 18.7 M25.2 23.6 L24.4 23.3 L25.1 24.7 Z M29.5 3.7 L30.4 5.5 L27.8 4.6 Z M3.6 1.3 L2.0 1.3 M3.6 9.7 L3.4 10.3 L4.0 9.6 Z M11.8 18.5 L12.6 20.9 M19.8 15.1 L22.2 15.6 L20.8 15.1 Z M10.0 -0.0 L9.0 0.5 L9.4 -0.1 Z M0.1 0.8 L1.5 3.7 L0.5 3.2 Z M13.1 12.6 L15.0 12.8 L13.8 13.9 Z M25.9 29.8 L24.7 31.3 M4.6 0.6 L5.7 0.5 L5.3 0.0 Z M6.7 29.1 L6.6 28.7 L6.7 29.2 Z M23.0 29.6 L23.4 30.7 M21.4 6.5 L20.8 7.0 L21.7 8.6 Z M11.8 18.8 L10.1 18.8 L11.5 18.5 Z M21.1 15.3 L21.9 16.2 L20.8 16.4 Z M12.1 9.6 L13.8 10.9 M28.0 9.4 L27.9 8.7 L26.1 10.3 Z M5.3 8.2 L6.6 10.2 M6.0 10.3 L6.0 9.6 L5.9 12.2 Z M25.7 18.9 L27.6 19.6 M25.1 20.7 L25.6 22.5 M11.5 6.9 L11.4 9.1 M1.0 18.8 L0.4 20.6 M27.9 4.6 L26.6 6.0 M10.8 20.7 L11.2 22.1 L8.4 23.4 Z M19.5 28.1 L19.4 30.8 M29.8 1.9 L31.8 3.9 M24.2 13.6 L25.9 14.8 M8.4 19.3 L7.5 20.0 M14.7 7.3 L12.7 9.0 M16.0 25.9 L15.0 26.7 L17.7 28.3 Z M3.5 5.5 L2.9 7.1 M27.5 3.6 L27.9 1.0 L27.7 1.9 Z M0.5 10.2 L1.5 11.4 M18.4 20.8 L17.5 20.2 L18.8 21.0 Z M10.7 5.9 L8.7 8.1 M11.1 9.1 L11.5 9.1 L10.7 9.3 Z M28.5 9.7 L29.4 9.7 L29.3 10.9 Z M13.6 28.0 L13.1 29.7 M13.3 3.0 L13.0 2.4 L13.8 1.3 Z M12.1 3.4 L13.5 5.2 L12.7 4.1 Z M2.8 27.2 L3.2 26.7 L3.6 27.5 Z M0.6 18.5 L1.1 19.2 L1.8 20.1 Z M29.8 11.9 L28.2 14.0 M30.3 1.3 L31.1 1.3 L29.6 1.1 Z M12.1 22.4 L12.2 21.9 L12.3 22.6 Z M24.2 4.7 L24.2 2.4 L22.9 3.7 Z M16.0 2.1 L16.2 2.1 L14.7 3.4 Z M8.0 22.8 L8.7 23.4 L8.7 24.0 Z M3.1 25.5 L3.0 26.8 M12.2 18.4 L12.9 21.0 M0.3 4.6 L-1.3 6.7 M4.4 16.5 L4.9 16.4 L4.1 15.8 Z M2.4 7.8 L3.0 8.8 M14.7 19.6 L14.1 22.4 M15.6 26.6 L14.7 27.0 L15.0 26.8 Z M12.9 13.5 L14.0 13.7 M14.9 16.1 L15.4 16.4 L15.2 17.0 Z M14.6 0.3 L16.4 0.3 M17.8 28.8 L18.5 30.4 M9.0 18.3 L9.7 17.1 L7.9 17.6 Z M8.1 23.9 L8.7 25.6 M8.6 20.4 L7.6 21.0 M9.8 9.5 L8.7 11.9 M1.7 22.9 L1.5 24.0 M27.8 19.2 L27.1 19.9" fill="#555" stroke="#111" stroke-width=".9"/>
    </pattern>
  </defs>
  <g clip-path="url(#pg)" fill="none" stroke="#111">
    <path d="M 324.9 434 A 297.8 297.8 0 0 1 607.0 237.2 L 607.0 248.0 A 287 287 0 0 0 336.4 434 Z" fill="url(#conc)" stroke="none"/>
    <path d="M 324.9 434.0 A 297.8 297.8 0 0 1 647.5 240.2" stroke-width="1.5"/>
    <path d="M 336.4 434.0 A 287.0 287.0 0 0 1 652.0 251.9" stroke-width="2.0"/>
    <path d="M 343.1 434.0 A 280.7 280.7 0 0 1 607.0 254.3" stroke-width="1.3"/>
    <path d="M 350.8 578.0 A 257.8 257.8 0 0 1 607.0 277.2" stroke-width="1.6"/>
    <!-- lower wall -->
    <path d="M 327 440 C 325.3 445.0 320.0 459.2 317.0 470.0 C 314.0 480.8 310.4 493.3 309.0 505.0 C 307.6 516.7 308.4 527.5 308.5 540.0 C 308.6 552.5 309.3 573.3 309.5 580.0 L 322 580 C 321.8 573.3 320.7 552.5 320.5 540.0 C 320.3 527.5 320.2 515.8 321.0 505.0 C 321.8 494.2 323.3 484.2 325.0 475.0 C 326.7 465.8 330.0 454.2 331.0 450.0 L 333 434 Z" fill="url(#conc)" stroke="none"/>
    <path d="M 321.0 431.0 C 319.3 436.7 314.0 452.7 311.0 465.0 C 308.0 477.3 304.6 492.5 303.0 505.0 C 301.4 517.5 301.6 527.5 301.5 540.0 C 301.4 552.5 302.3 573.3 302.5 580.0" stroke-width="1.5"/>
    <path d="M 325.0 431.0 C 323.3 436.7 318.1 452.7 315.0 465.0 C 311.9 477.3 308.2 492.5 306.5 505.0 C 304.8 517.5 305.2 527.5 305.0 540.0 C 304.8 552.5 305.4 573.3 305.5 580.0" stroke-width="1.3"/>
    <path d="M 321 431 H 325" stroke-width="1.3"/>
    <path d="M 327.0 440.0 C 325.3 445.0 320.0 459.2 317.0 470.0 C 314.0 480.8 310.4 493.3 309.0 505.0 C 307.6 516.7 308.4 527.5 308.5 540.0 C 308.6 552.5 309.3 573.3 309.5 580.0" stroke-width="1.5"/>
    <path d="M 331.0 450.0 C 330.0 454.2 326.7 465.8 325.0 475.0 C 323.3 484.2 321.8 494.2 321.0 505.0 C 320.2 515.8 320.3 527.5 320.5 540.0 C 320.7 552.5 321.8 573.3 322.0 580.0" stroke-width="1.7"/>
    <!-- horizontal lines -->
    <path d="M 445 247 H 607" stroke-width="1.5"/>
    <path d="M 325 434.5 H 607" stroke-width="2.1"/>
    <path d="M 331 450.5 H 607" stroke-width="1.6"/>
    <path d="M 319 541 H 607" stroke-width="1.6"/>
    <!-- verticals -->
    <path d="M 449.5 244 V 578" stroke-width="1.6" stroke="#222"/>
    <path d="M 438.5 400 V 578" stroke="#bbb" stroke-width="1"/>
    <path d="M 607 227 V 282" stroke-width="1.5"/>
    <path d="M 607 282 V 578" stroke-width="1.7" stroke-dasharray="11 5"/>
    <!-- wall joint dark -->
    <path d="M 330 434 L 340 433 L 341 448 L 333 450Z" fill="#111"/>
    <path d="M 323 437 L 332 437 M 323 442 L 331 444" stroke-width="1.2"/>
    <path d="M 340 437 L 366 447" stroke-width="1.7"/>
    <circle cx="366" cy="447" r="1.6" fill="#111"/>
    <circle cx="449.5" cy="434.5" r="1.8" fill="#111"/>
    <circle cx="449.5" cy="450.5" r="1.4" fill="#111"/>
    <circle cx="607" cy="277.2" r="1.4" fill="#111"/>
    <circle cx="449.5" cy="247" r="1.4" fill="#111"/>
    <!-- leaders -->
    <path d="M 304 397.5 H 317.5 L 331 436" stroke-width="1.5"/>
    <path d="M 274 421.5 H 299 V 434" stroke-width="1.5"/>
    <path d="M 294 434.5 H 315" stroke-width="1.7"/>
    <path d="M 373.7 380 L 397 398 H 402" stroke-width="1.4"/>
    <path d="M 510 413 H 506 L 502 434" stroke-width="1.4"/>
    <path d="M 442 422 Q 444 430 449 434" stroke-width="1.3"/>
    <path d="M 268 509 L 302 517" stroke-width="1.4"/>
    <path d="M 331 530 L 322 532" stroke-width="1.2"/>
    <path d="M 512 574 H 506" stroke-width="1.4"/>
    <!-- label boxes -->
    <g stroke="#c4c4c4" stroke-width=".8" fill="#fff">
      <rect x="245.5" y="393.5" width="58.5" height="23" rx="2"/>
      <rect x="245.5" y="418.4" width="28.3" height="7.4" rx="2"/>
      <rect x="401.8" y="394" width="31.6" height="8" rx="2"/>
      <rect x="509.7" y="410.2" width="66.6" height="17.8" rx="2"/>
      <rect x="517" y="351" width="46" height="13" rx="2"/>
      <rect x="518" y="495" width="50.3" height="11.3" rx="2"/>
      <rect x="451.5" y="532.8" width="34.5" height="6.2" rx="2"/>
      <rect x="236.6" y="505" width="31.4" height="9" rx="2"/>
      <rect x="510" y="571.5" width="67" height="10" rx="2"/>
      <rect x="441" y="338" width="6.8" height="23" rx="2"/>
      <rect x="438.5" y="409" width="7.5" height="13" rx="2"/>
      <rect x="341" y="503.6" width="9" height="18" rx="2"/>
      <rect x="321" y="526" width="10" height="9" rx="2"/>
      <rect x="439" y="436.5" width="7" height="12.5" rx="2"/>
      <rect x="441" y="515" width="6" height="30" rx="2"/>
      <rect x="453" y="311" width="21" height="8" rx="2" transform="rotate(-30 463 315)"/>
    </g>
    <!-- label text (tiny) -->
    <g fill="#333" stroke="none" font-family="Liberation Sans" font-size="4.2" style="text-rendering:geometricPrecision">
      <text x="248" y="399" textLength="53" lengthAdjust="spacingAndGlyphs">1 1/2"x1 1/2" TOP SILL CURVED</text>
      <text x="248" y="404" textLength="40" lengthAdjust="spacingAndGlyphs">LENGTH, C/W ANCHOR</text>
      <text x="248" y="409" textLength="44" lengthAdjust="spacingAndGlyphs">BOLTS CAST INTO CONC</text>
      <text x="248" y="414" textLength="16" lengthAdjust="spacingAndGlyphs">CORBEL</text>
      <text x="248" y="424" textLength="23" lengthAdjust="spacingAndGlyphs">POUR JOINT</text>
      <text x="404" y="400" textLength="26" lengthAdjust="spacingAndGlyphs">FORM SET (A)</text>
      <text x="239" y="511.5" textLength="26" lengthAdjust="spacingAndGlyphs">FORM SET (A)</text>
      <text x="512" y="415" textLength="38" lengthAdjust="spacingAndGlyphs">5/8" GROUT PLYWOOD</text>
      <text x="512" y="420" textLength="61" lengthAdjust="spacingAndGlyphs">SHEATHING ON 1/2" TOP HANGER</text>
      <text x="512" y="425" textLength="45" lengthAdjust="spacingAndGlyphs">JOISTS @ 16" O.C. MAX</text>
      <text x="512" y="577.5" textLength="38" lengthAdjust="spacingAndGlyphs">5/8" GROUT PLYWOOD</text>
      <text x="454" y="538" font-size="3.5">10' - 0" RADIUS</text>
      <text transform="translate(446 360) rotate(-90)" font-size="4">10'-7 5/8"</text>
      <text transform="translate(444.5 421) rotate(-90)" font-size="4">3/8"</text>
      <text transform="translate(445 448) rotate(-90)" font-size="4">4 1/4"</text>
      <text transform="translate(446 543) rotate(-90)" font-size="4">8' - 0 3/4"</text>
      <text transform="translate(348.5 520) rotate(-90)" font-size="4">5' - 0"</text>
      <text transform="translate(458 320) rotate(-30)" font-size="4">12' - 0 3/4"</text>
    </g>
    <g fill="#444" stroke="none" font-family="Liberation Sans">
      <text x="519.5" y="360.5" font-size="7">BEDROOMS</text>
      <text x="520" y="503.5" font-size="7.3">LIVING ROOM</text>
    </g>
  </g>
</svg>
<div class="a" style="left:3px;top:573px;width:870px;height:5px;background:linear-gradient(rgba(0,0,0,0),rgba(0,0,0,.25) 60%,rgba(0,0,0,.75))"></div>
<div class="a" style="left:3px;top:578px;width:883px;height:1px;background:#fff"></div>
<!-- SCROLLBAR -->
<div class="a" style="left:873px;top:189px;width:13px;height:389px;background:linear-gradient(90deg,#bdbdbd,#d2d2d2 40%,#cbcbcb);border-left:1px solid #8c8c8c"></div>
<div class="a" style="left:873px;top:190px;width:13px;height:14px;background:linear-gradient(#fff,#f1f1f1);border:1px solid #9a9a9a;border-radius:2px"></div>
<svg style="left:875.5px;top:194.5px" width="8" height="5" viewBox="0 0 8 5"><path d="M0.5 4.5 L4 1 L7.5 4.5Z" fill="#666"/></svg>
<div class="a" style="left:873px;top:205px;width:13px;height:12px;background:linear-gradient(#fff,#f1f1f1);border:1px solid #8f8f8f;border-radius:2px"></div>
<svg style="left:876px;top:207px" width="8" height="7" viewBox="0 0 8 7"><path d="M0.5 1 H7 M0.5 3.5 H7 M0.5 6 H7" stroke="#6a6a6a" stroke-width=".9"/></svg>
<div class="a" style="left:873px;top:564px;width:13px;height:14px;background:linear-gradient(#fff,#f1f1f1);border:1px solid #9a9a9a;border-radius:2px"></div>
<svg style="left:875.5px;top:569px" width="8" height="5" viewBox="0 0 8 5"><path d="M0.5 0.5 L4 4 L7.5 0.5Z" fill="#666"/></svg>
<!-- STATUS BAR -->
<div class="a" style="left:3px;top:578px;width:883px;height:30px;background:#f5f5f5"></div>
<svg style="left:0;top:0" width="890" height="612" viewBox="0 0 890 612">
  <defs>
    <pattern id="grip" width="3" height="3" patternUnits="userSpaceOnUse"><rect x="0" y="0" width="1" height="1" fill="#b4b4b4"/></pattern>
    <symbol id="lbar" viewBox="0 0 7 9"><path d="M0.5 0 V9" stroke="#777" stroke-width="1"/><path d="M7 0.5 L2 4.5 L7 8.5Z" fill="#999"/></symbol>
    <symbol id="chev" viewBox="0 0 8 11"><path d="M0.5 0.5 L4 3.5 L7.5 0.5 V3 L4 6 L0.5 3Z M0.5 5 L4 8 L7.5 5 V7.5 L4 10.5 L0.5 7.5Z" fill="#666"/></symbol>
  </defs>
  <!-- left gripper -->
  <rect x="5" y="581" width="8" height="15" fill="url(#grip)"/>
  <use href="#lbar" x="5" y="598" width="7" height="9"/>
  <!-- gears -->
  <g transform="translate(22.5 589)">
    <circle r="4.6" fill="none" stroke="#8a7f70" stroke-width="3.2"/>
    <path d="M0 -7.5 V7.5 M-7.5 0 H7.5 M-5.3 -5.3 L5.3 5.3 M5.3 -5.3 L-5.3 5.3" stroke="#8a7f70" stroke-width="2.6"/>
    <circle r="2.6" fill="#f5f5f5"/>
  </g>
  <g transform="translate(31.5 597.5)">
    <circle r="4.3" fill="none" stroke="#f9a531" stroke-width="3"/>
    <path d="M0 -6.8 V6.8 M-6.8 0 H6.8 M-4.8 -4.8 L4.8 4.8 M4.8 -4.8 L-4.8 4.8" stroke="#f9a531" stroke-width="2.4"/>
    <circle r="2.5" fill="#f5f5f5"/>
  </g>
  <path d="M45 592 H51 L48 595.5Z" fill="#333"/>
  <rect x="56" y="581" width="1" height="24" fill="#dcdcdc"/>
  <use href="#chev" x="62" y="588" width="8" height="11"/>
  <!-- page nav -->
  <rect x="233" y="581" width="8" height="15" fill="url(#grip)"/>
  <use href="#lbar" x="233" y="598" width="7" height="9"/>
  <circle cx="255" cy="594" r="10.3" fill="#f8f8f8" stroke="#cfc9bf" stroke-width="1.2"/>
  <path d="M251 589.5 V598.5 M259 589.5 L254.5 594 L259 598.5" stroke="#a9cdea" stroke-width="2" fill="none"/>
  <circle cx="282.6" cy="594" r="10.3" fill="#f8f8f8" stroke="#cfc9bf" stroke-width="1.2"/>
  <path d="M285 589.5 L280.5 594 L285 598.5" stroke="#a9cdea" stroke-width="2" fill="none"/>
  <rect x="298.5" y="582.5" width="89" height="22" rx="3" fill="#fff" stroke="#a9a9a9"/>
  <circle cx="403.4" cy="594" r="10.3" fill="#f8f8f8" stroke="#8c8273" stroke-width="1.3"/>
  <path d="M401 589.5 L405.5 594 L401 598.5" stroke="#3c8fd4" stroke-width="2" fill="none"/>
  <circle cx="431" cy="594" r="10.3" fill="#f8f8f8" stroke="#8c8273" stroke-width="1.3"/>
  <path d="M427 589.5 L431.5 594 L427 598.5 M435 589.5 V598.5" stroke="#3c8fd4" stroke-width="2" fill="none"/>
  <rect x="448" y="581" width="1" height="24" fill="#dcdcdc"/>
  <circle cx="465.6" cy="594" r="10.3" fill="#f8f8f8" stroke="#8c8273" stroke-width="1.3"/>
  <path d="M460 594 H471 M464.5 589 L459.5 594 L464.5 599" stroke="#7cb342" stroke-width="2.2" fill="none"/>
  <use href="#chev" x="483" y="588" width="8" height="11"/>
  <rect x="494" y="581" width="8" height="15" fill="url(#grip)"/>
  <use href="#lbar" x="494" y="598" width="7" height="9"/>
  <!-- page layout icons -->
  <path d="M507.5 584 H519 L523.5 588.5 V603.5 H507.5Z" fill="#fff" stroke="#7e7465"/>
  <path d="M519 584 V588.5 H523.5Z" fill="#6f6658"/>
  <rect x="530.5" y="580.5" width="27" height="27" rx="3" fill="#f8e3a6" stroke="#a38e58"/>
  <rect x="531.5" y="581.5" width="25" height="13" rx="2" fill="#fbe8b0" opacity=".6"/>
  <path d="M535.5 581.5 H552.5 V591.5 H535.5 M535.5 605.5 V595.5 H548 L552.5 600 V605.5" fill="#fff" stroke="#7e7465"/>
  <path d="M548 595.5 V600 H552.5Z" fill="#6f6658"/>
  <path d="M560.5 588.5 H567 L570.5 592 V601.5 H560.5Z M573.5 588.5 H580 L583.5 592 V601.5 H573.5Z" fill="#fff" stroke="#7e7465"/>
  <path d="M567 588.5 V592 H570.5Z M580 588.5 V592 H583.5Z" fill="#6f6658"/>
  <use href="#chev" x="589" y="588" width="8" height="11"/>
  <rect x="600" y="581" width="8" height="15" fill="url(#grip)"/>
  <use href="#lbar" x="600" y="598" width="7" height="9"/>
  <!-- zoom box -->
  <rect x="609.5" y="582.5" width="81" height="22" rx="3" fill="#fff" stroke="#a9a9a9"/>
  <path d="M679 592 H686 L682.5 596Z" fill="#555"/>
  <rect x="695" y="581" width="1" height="24" fill="#dcdcdc"/>
  <circle cx="712.8" cy="594" r="10.3" fill="#fbf0d8" stroke="#8c8273" stroke-width="1.5"/>
  <path d="M706.5 594 H719" stroke="#3c8fd4" stroke-width="1.6"/>
  <path d="M729 594.5 H829" stroke="#8a8a8a" stroke-width="1"/>
  <rect x="775.5" y="582.5" width="6.5" height="22.5" rx="2" fill="#fff" stroke="#555"/>
  <use href="#chev" x="834" y="588" width="8" height="11"/>
  <rect x="845" y="581" width="8" height="15" fill="url(#grip)"/>
  <use href="#lbar" x="845" y="598" width="7" height="9"/>
  <use href="#chev" x="867" y="588" width="8" height="11"/>
  <path d="M878 580 H886 L882 584Z" fill="#666"/>
  <path d="M878 585.5 H886" stroke="#666" stroke-width="1"/>
</svg>
<div class="t" style="left:365px;top:586px;font-size:13px;color:#222">1</div>
<div class="t" style="left:372px;top:585px;font-size:14px;color:#666">/</div>
<div class="t" style="left:379px;top:584px;font-size:10px;color:#444">9</div>
<div class="t" style="left:613px;top:587px;font-size:12px;color:#111">100%</div>
</body></html>
